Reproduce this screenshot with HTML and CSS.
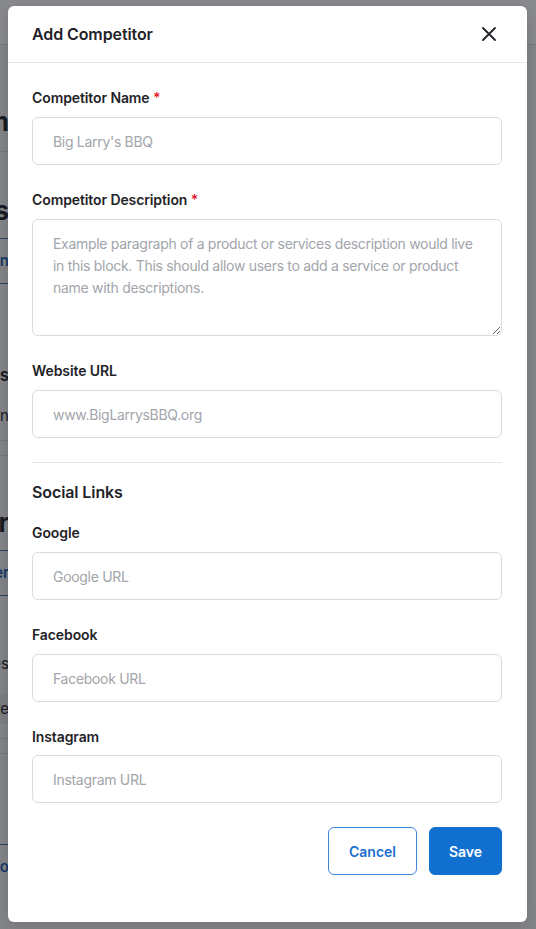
FILE: index.html
```html
<!DOCTYPE html>
<html lang="en">
<head>
<meta charset="utf-8">
<title>Add Competitor</title>
<link rel="stylesheet" href="styles.css">
</head>
<body>
<div class="page">
  <div class="page-top"></div>
  <div class="page-col">
    <div class="bg-row bg-h1">Platform</div>
    <div class="bg-sep"></div>
    <div class="bg-row bg-h2">Competitors</div>
    <div class="bg-tab">Information</div>
    <div class="bg-row bg-sub">Keywords</div>
    <div class="bg-row bg-txt">Sign in</div>
    <div class="bg-sep"></div>
    <div class="bg-sep"></div>
    <div class="bg-row bg-h2 bg-h2b">Partner</div>
    <div class="bg-tab">Customer</div>
    <div class="bg-row bg-txt bg-gap">Services</div>
    <div class="bg-row bg-txt bg-band">Active care</div>
    <div class="bg-sep"></div>
    <div class="bg-sep"></div>
    <div class="bg-tab bg-last">Add Competito</div>
  </div>
</div>
<div class="overlay"></div>

<div class="modal" role="dialog" aria-labelledby="modal-title">
  <div class="modal-header">
    <h2 id="modal-title" class="modal-title">Add Competitor</h2>
    <button class="close-btn" aria-label="Close">
      <svg width="16" height="16" viewBox="0 0 16 16"><path d="M2 2 L14 14 M14 2 L2 14" stroke="#1f2328" stroke-width="1.8" stroke-linecap="round"/></svg>
    </button>
  </div>
  <div class="modal-body">
    <div class="field">
      <label class="label">Competitor Name <span class="req">*</span></label>
      <input class="input" type="text" placeholder="Big Larry's BBQ">
    </div>
    <div class="field">
      <label class="label">Competitor Description <span class="req">*</span></label>
      <textarea class="input textarea" placeholder="Example paragraph of a product or services description would live in this block. This should allow users to add a service or product name with descriptions."></textarea>
    </div>
    <div class="field">
      <label class="label">Website URL</label>
      <input class="input" type="text" placeholder="www.BigLarrysBBQ.org">
    </div>
    <div class="divider"></div>
    <h3 class="section-title">Social Links</h3>
    <div class="field">
      <label class="label">Google</label>
      <input class="input" type="text" placeholder="Google URL">
    </div>
    <div class="field">
      <label class="label">Facebook</label>
      <input class="input" type="text" placeholder="Facebook URL">
    </div>
    <div class="field field-tight">
      <label class="label">Instagram</label>
      <input class="input" type="text" placeholder="Instagram URL">
    </div>
    <div class="actions">
      <button class="btn btn-outline">Cancel</button>
      <button class="btn btn-primary">Save</button>
    </div>
  </div>
</div>
</body>
</html>
```

FILE: styles.css
```css
* { box-sizing: border-box; }
html, body { margin: 0; padding: 0; }
body {
  width: 536px;
  height: 929px;
  overflow: hidden;
  font-family: Inter, "Noto Sans", "Liberation Sans", sans-serif;
  background: #f4f5f7;
  position: relative;
}

/* Background page (mostly hidden behind the modal) */
.page { width: 536px; height: 929px; }
.page-top { height: 45px; background: #ffffff; border-bottom: 1px solid #d8dade; }
.page-col {
  width: 9px;
  overflow: hidden;
  display: flex;
  flex-direction: column;
  align-items: flex-end;
}
.bg-row, .bg-tab { white-space: nowrap; color: #1f2328; }
.bg-h1 { font-size: 26px; font-weight: 700; margin-top: 62px; line-height: 30px; }
.bg-sep { width: 9px; height: 1px; background: #d8dade; margin-top: 14px; flex-shrink: 0; }
.bg-h2 { font-size: 26px; font-weight: 700; line-height: 30px; margin-top: 44px; }
.bg-h2b { margin-top: 52px; }
.bg-tab {
  font-size: 15px;
  font-weight: 600;
  color: #1a5fb4;
  line-height: 44px;
  border-top: 1px solid #3a6fb5;
  border-bottom: 1px solid #3a6fb5;
  margin-top: 12px;
  width: 9px;
  display: flex;
  justify-content: flex-end;
}
.bg-sub { font-size: 17px; font-weight: 600; margin-top: 80px; line-height: 22px; }
.bg-txt { font-size: 15px; line-height: 20px; margin-top: 20px; }
.bg-gap { margin-top: 58px; }
.bg-band { background: #e7e8eb; line-height: 30px; width: 9px; display: flex; justify-content: flex-end; }
.bg-last { margin-top: 90px; border-bottom: none; }

.overlay {
  position: absolute;
  inset: 0;
  background: rgba(20, 22, 28, 0.5);
}

/* Modal */
.modal {
  position: absolute;
  left: 8px;
  top: 6px;
  width: 519px;
  height: 916px;
  background: #ffffff;
  border-radius: 6px;
  box-shadow: 0 4px 16px rgba(0, 0, 0, 0.15);
}
.modal-header {
  display: flex;
  align-items: center;
  justify-content: space-between;
  padding: 16px 24px;
  border-bottom: 1px solid #e6e7ea;
}
.modal-title {
  margin: 0;
  font-size: 16px;
  line-height: 24px;
  font-weight: 600;
  color: #1f2328;
  letter-spacing: -0.1px;
}
.close-btn {
  border: 0;
  background: none;
  padding: 0;
  margin-right: 6px;
  width: 16px;
  height: 16px;
  display: flex;
  cursor: pointer;
}
.modal-body {
  padding: 25px 25px 0 24px;
}
.field {
  display: flex;
  flex-direction: column;
  margin-bottom: 25px;
}
.field-tight .label { margin-bottom: 8px; }
.label {
  font-size: 14px;
  line-height: 20px;
  font-weight: 600;
  color: #1f2328;
  margin-bottom: 9px;
  letter-spacing: -0.1px;
}
.req { color: #e0212b; }
.input {
  width: 100%;
  height: 48px;
  border: 1px solid #d9dbdf;
  border-radius: 6px;
  padding: 0 20px;
  font-family: inherit;
  font-size: 14px;
  letter-spacing: -0.3px;
  color: #1f2328;
  background: #fff;
  outline: none;
}
.input::placeholder { color: #a2a5ab; }
.textarea {
  height: 117px;
  padding: 13px 16px 13px 20px;
  line-height: 22px;
  resize: vertical;
}
.divider {
  height: 1px;
  background: #e6e7ea;
  margin: -1px 0 17px;
}
.section-title {
  margin: 0 0 19px;
  font-size: 16px;
  line-height: 24px;
  font-weight: 600;
  color: #1f2328;
  letter-spacing: -0.1px;
}
.actions {
  display: flex;
  justify-content: flex-end;
  gap: 12px;
  margin-top: -1px;
}
.btn {
  height: 48px;
  border-radius: 6px;
  font-family: inherit;
  font-size: 14px;
  font-weight: 600;
  cursor: pointer;
}
.btn-outline {
  width: 89px;
  background: #fff;
  border: 1px solid #3d86d8;
  color: #1a6fcf;
}
.btn-primary {
  width: 73px;
  background: #1170cf;
  border: 1px solid #1170cf;
  color: #fff;
}
```
